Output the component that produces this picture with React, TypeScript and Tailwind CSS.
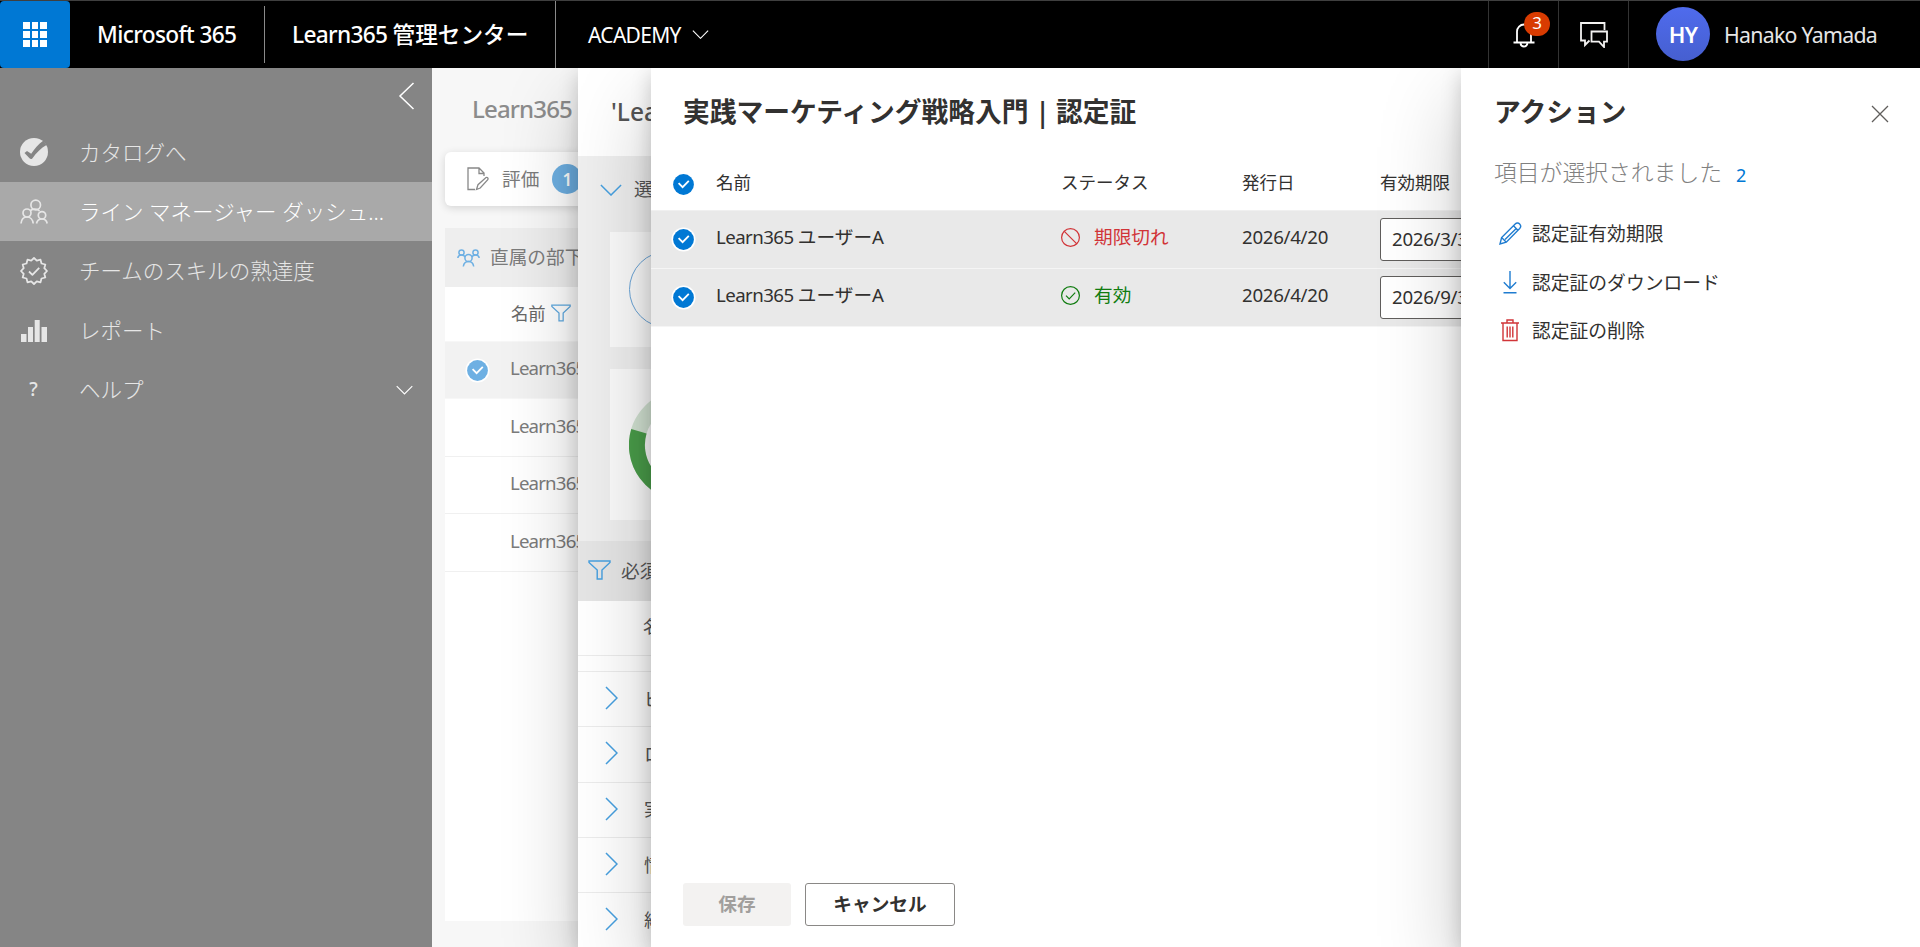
import { ReactNode } from "react";

type IconProps = { className?: string };

const PANEL_SHADOW =
  "shadow-[0_34px_77px_rgba(0,0,0,0.22),0_6px_19px_rgba(0,0,0,0.18)]";

//Latin text is set a little tighter than the Japanese text around it
const Latin = ({ children }: { children: ReactNode }) => (
  <span className="tracking-[-0.03em]">{children}</span>
);

const CheckCircle = ({ className }: IconProps) => (
  <svg className={className} width="25" height="25" viewBox="0 0 25 25">
    <circle cx="12.5" cy="12.5" r="12" fill="#fff" />
    <circle cx="12.5" cy="12.5" r="10.4" fill="currentColor" />
    <path d="M7.6 11.2l4 4 6.2-6.4" fill="none" stroke="#fff" strokeWidth="1.8" />
  </svg>
);

const FilterIcon = ({ className }: IconProps) => (
  <svg className={className} viewBox="0 0 24 21" fill="none" stroke="currentColor" strokeWidth="1.5">
    <path d="M1 1h22v1.6l-8.4 8V20H9.6v-9.4L1 2.6z" />
  </svg>
);

const Chevron = ({ className }: IconProps) => (
  <svg className={className} viewBox="0 0 24 13" fill="none" stroke="currentColor" strokeWidth="1.6">
    <path d="M1 1l11 11L23 1" />
  </svg>
);

const ChevronRight = () => (
  <svg width="13" height="24" viewBox="0 0 13 24" fill="none" stroke="#47a0e0" strokeWidth="1.5" className="-mt-[2px] shrink-0">
    <path d="M1 1l11 11L1 23" />
  </svg>
);

const CatalogIcon = () => (
  <svg width="28" height="28" viewBox="0 0 28 28">
    <circle cx="14" cy="14" r="14" fill="#e6e6e6" />
    <path d="M4.5 15l2.5-2 4.2 2.7C14.5 11 18 6.500 23.5 2.500l3 4.500C21 10 16.500 14.500 12.300 20.500c-1 .9-2 .7-2.800-.2z" fill="#858585" />
  </svg>
);

const TeamIcon = () => (
  <svg width="28" height="25" viewBox="0 0 28 25" fill="none" stroke="#e6e6e6" strokeWidth="1.7">
    <circle cx="15.7" cy="6" r="4.8" />
    <circle cx="7" cy="14" r="4" />
    <circle cx="22" cy="16.3" r="3.7" />
    <path d="M1 24.5c.4-4 2.800-6.500 6-6.500s5.800 2.500 6.200 6.500M16.500 24.500c.5-2.900 2.500-4.500 5.500-4.500s4.700 1.600 5.200 4.500M10.500 11.500c1.500-1 3-1.500 5-1.300 1.700.1 3 .7 4 1.800" />
  </svg>
);

//12-lobed badge
const SkillIcon = () => (
  <svg width="28" height="28" viewBox="0 0 28 28" fill="none" stroke="#e6e6e6" strokeWidth="1.8" strokeLinejoin="round">
    <path d="M14 1l2.800 2.700 3.700-1 1 3.800 3.800 1-1 3.700L27 14l-2.700 2.800 1 3.700-3.800 1-1 3.800-3.700-1L14 27l-2.800-2.700-3.700 1-1-3.800-3.800-1 1-3.700L1 14l2.700-2.800-1-3.700 3.800-1 1-3.800 3.700 1z" />
    <path d="M9 14.5l3.400 3.300 6.800-6.900" />
  </svg>
);

const ReportIcon = () => (
  <svg width="26" height="22" viewBox="0 0 26 22" fill="#e6e6e6" className="mt-px">
    <path d="M0 14h5.500v8H0zM7 7h5v15H7zM13.700 0h5v22h-5zM20.500 7H26v15h-5.500z" />
  </svg>
);

const navItems = [
  { label: "カタログへ", icon: <CatalogIcon /> },
  { label: "ライン マネージャー ダッシュ...", icon: <TeamIcon />, active: true },
  { label: "チームのスキルの熟達度", icon: <SkillIcon /> },
  { label: "レポート", icon: <ReportIcon /> },
  { label: "ヘルプ", icon: <span className="text-[19px] font-medium">?</span>, expandable: true },
];

const certificates = [
  { name: "ユーザーA", expired: true, issued: "2026/4/20", expiry: "2026/3/31" },
  { name: "ユーザーA", expired: false, issued: "2026/4/20", expiry: "2026/9/30" },
];

const courses = ["ビジネス", "ロジカル", "実践マーケティング", "情報", "経営"];

const Header = () => (
  <header className="relative z-50 flex h-[68px] shrink-0 items-stretch border-t border-[#3f3f3f] bg-black text-white">
    <div className="flex w-[70px] items-center justify-center rounded-sm bg-[#0078d4]">
      <div className="grid grid-cols-3 gap-[2px]">
        {Array.from({ length: 9 }, (_, i) => (
          <div key={i} className="h-[7px] w-[6.5px] bg-white" />
        ))}
      </div>
    </div>
    <div className="flex w-[194px] items-center pl-[27px] pt-[2px] text-[22.67px] font-medium tracking-[-0.027em]">
      Microsoft 365
    </div>
    <div className="my-[5px] w-px bg-[#8a8a8a]" />
    <div className="flex w-[290px] items-center whitespace-pre pl-[27px] pt-[2px] text-[22.67px] font-medium">
      <Latin>Learn365 </Latin>管理センター
    </div>
    <div className="w-px bg-[#8a8a8a]" />
    <div className="flex items-center gap-[11px] pl-[32px] text-[21px]">
      <span className="pt-[2px] tracking-[-0.033em]">ACADEMY</span>
      <Chevron className="h-[9px] w-[17px]" />
    </div>
    <div className="ml-auto flex">
      <div className="relative flex w-[70px] items-center justify-center border-l border-[#333]">
        <svg width="22" height="26" viewBox="0 0 22 26" fill="none" stroke="#fff" strokeWidth="1.8">
          <path d="M4 20V9.500a7 7 0 0 1 14 0V20M.5 20.500h21M7.500 21.500c.4 2 1.500 3 3.500 3s3-1 3.500-3" />
        </svg>
        <span className="absolute left-[35px] top-[11px] flex h-[24px] w-[26px] items-center justify-center rounded-full bg-[#d83b01] pb-[3px] text-[17px] leading-none">
          3
        </span>
      </div>
      <div className="flex w-[70px] items-center justify-center border-l border-[#333]">
        <svg width="28" height="26" viewBox="0 0 28 26" fill="none" stroke="#f3f2f1" strokeWidth="1.8">
          <path d="M24.500 8V1H1v17.500h4V23l4.500-4.500M11.500 9.500H27v10.200h-3V25l-5-5.300h-7.500z" />
        </svg>
      </div>
      <div className="flex w-[292px] items-center border-l border-[#333] pl-[27px]">
        <div className="-mt-[2px] flex size-[54px] items-center justify-center rounded-full bg-linear-to-b from-[#4f6bed] to-[#465fd0] text-[22px] font-semibold tracking-[-0.03em]">
          HY
        </div>
        <span className="ml-[14px] text-[21.3px] tracking-[-0.034em] text-[#e6e6e6]">
          Hanako Yamada
        </span>
      </div>
    </div>
  </header>
);

const Sidebar = () => (
  <nav className="flex w-[432px] shrink-0 flex-col bg-[#858585] text-[#e6e6e6]">
    <div className="flex h-[54.5px] justify-end pr-[17px] pt-[14px]">
      <svg width="17" height="28" viewBox="0 0 17 28" fill="none" stroke="#fff" strokeWidth="1.5">
        <path d="M15.500 1L2 14l13.500 13" />
      </svg>
    </div>
    {navItems.map((item) => (
      <div
        key={item.label}
        className={
          item.active
            ? "flex h-[59px] items-center bg-[#a9a9a9] text-white"
            : "flex h-[59.5px] items-center"
        }
      >
        <div className="flex w-[67px] items-center justify-center">{item.icon}</div>
        <span className="ml-[12px] text-[21.5px] font-light leading-none">{item.label}</span>
        {item.expandable && <Chevron className="ml-auto mr-[19px] h-[10px] w-[17px] text-white" />}
      </div>
    ))}
  </nav>
);

const TeamPage = () => (
  <main className="flex w-[146px] shrink-0 flex-col overflow-hidden whitespace-nowrap bg-[#f7f7f7] pl-[13px] text-[18.67px] text-[#7b7b7b]">
    <div className="flex h-[82px] shrink-0 items-center pl-[27px] text-[24px] font-medium tracking-[-0.035em] text-[#8c8c8c]">
      Learn365
    </div>
    <div className="mt-[2px] flex h-[54px] w-[200px] shrink-0 items-center rounded-md bg-white pl-[22px] shadow-[0_2px_8px_rgba(0,0,0,0.14)]">
      <svg width="22" height="24" viewBox="0 0 22 24" fill="none" stroke="#888" strokeWidth="1.3">
        <path d="M8 22.500H1V1h11l5 5v3M12 1v5.500h5" />
        <path d="M9.500 22.500l1.500-4.800 8-7.200c1.500-.5 2.500.8 1.800 2.200l-7.600 8.300z" />
      </svg>
      <span className="ml-[13px]">評価</span>
      <span className="ml-[13px] flex size-[30px] items-center justify-center rounded-full bg-[#6eb0e3] text-[17px] font-semibold text-white">
        1
      </span>
    </div>
    <div className="mt-[22px] flex h-[59px] shrink-0 items-center bg-[#eeeeee] pl-[12px]">
      <svg width="23" height="18" viewBox="0 0 23 18" fill="none" stroke="#6eb0e3" strokeWidth="1.5" className="shrink-0">
        <circle cx="4.5" cy="3.5" r="2.6" />
        <circle cx="18.5" cy="3.5" r="2.6" />
        <circle cx="11.5" cy="9" r="3.6" />
        <path d="M.8 9c.3-2 1.600-3 3.700-3s3 .8 3.800 2M14.700 8c.8-1.200 1.700-2 3.800-2s3.400 1 3.700 3M6.300 17.500c.5-3.200 2.300-4.900 5.200-4.900s4.700 1.700 5.200 4.900" />
      </svg>
      <span className="ml-[10px]">直属の部下</span>
    </div>
    <div className="flex h-[54px] shrink-0 items-center bg-white pl-[66px] text-[17.33px] text-[#666]">
      名前
      <FilterIcon className="-mt-[3px] ml-[5px] h-[18px] w-[20px] text-[#5fa9e0]" />
    </div>
    <div className="flex h-[58px] shrink-0 items-center border-y border-[#f7f7f7] bg-[#f2f2f2] pl-[20px]">
      <CheckCircle className="shrink-0 text-[#6eb0e3]" />
      <span className="ml-[20px] pb-[3px] tracking-[-0.045em]">Learn365</span>
    </div>
    {[0, 1, 2].map((i) => (
      <div
        key={i}
        className="flex h-[57.7px] shrink-0 items-center border-b border-[#f0f0f0] bg-white pb-[3px] pl-[65px] tracking-[-0.045em]"
      >
        Learn365
      </div>
    ))}
    <div className="mb-[26px] flex-1 bg-white" />
  </main>
);

const UserPanel = () => (
  <section className={`relative z-10 flex w-[73px] shrink-0 flex-col bg-[#efefef] text-[#555] ${PANEL_SHADOW}`}>
    <div className="flex w-[73px] flex-1 flex-col overflow-hidden whitespace-nowrap text-[18.67px]">
      <div className="flex h-[88px] shrink-0 items-center bg-white pl-[33px] text-[24.5px] font-medium">
        'Learn365
      </div>
      <div className="flex h-[76px] shrink-0 items-center pb-[9px] pl-[22px]">
        <Chevron className="h-[12px] w-[22px] shrink-0 text-[#47a0e0]" />
        <span className="ml-[12px]">選択</span>
      </div>
      <div className="ml-[32px] flex h-[115px] shrink-0 items-center bg-[#fbfbfb] pl-[19px]">
        <svg width="78" height="78" viewBox="0 0 78 78" className="shrink-0">
          <circle cx="38.5" cy="38.5" r="38" fill="none" stroke="#6ba5d8" />
        </svg>
      </div>
      <div className="ml-[32px] mt-[22px] flex h-[151px] shrink-0 items-center bg-[#fbfbfb] pl-[19px]">
        <svg width="112" height="112" viewBox="0 0 112 112" fill="none" strokeWidth="16" className="shrink-0">
          <circle cx="56" cy="56" r="48" stroke="#d3e3d3" />
          <path d="M9.900 42.200A48 48 0 0 0 56 104" stroke="#4a9d4a" />
        </svg>
      </div>
      <div className="mt-[21px] flex h-[60px] shrink-0 items-center bg-[#e5e5e5] pl-[10px]">
        <FilterIcon className="-mt-[2px] h-[20px] w-[23px] shrink-0 text-[#47a0e0]" />
        <span className="ml-[10px]">必須</span>
      </div>
      <div className="flex h-[55px] shrink-0 items-center border-b border-[#ececec] bg-white pb-[2px] pl-[65px] text-[17.33px]">
        名前
      </div>
      <div className="h-[16px] shrink-0 border-b border-[#ececec] bg-white" />
      {courses.map((course) => (
        <div
          key={course}
          className="flex h-[55.25px] shrink-0 items-center border-b border-[#ececec] bg-white pl-[27px]"
        >
          <ChevronRight />
          <span className="ml-[26px]">{course}</span>
        </div>
      ))}
    </div>
  </section>
);

const CertificatePanel = () => (
  <section className={`relative z-20 flex w-[810px] shrink-0 flex-col bg-white text-[#323130] ${PANEL_SHADOW}`}>
    <div className="flex w-[810px] flex-1 flex-col overflow-hidden whitespace-nowrap text-[18.67px]">
      <h1 className="flex h-[88px] items-center whitespace-pre pl-[32px] text-[26.75px] font-bold">
        実践マーケティング戦略入門<span className="font-semibold tracking-[-0.015em]"> | </span>認定証
      </h1>
      <div className="flex h-[55px] items-center border-b border-[#f0f0f0] pl-[20px] text-[17.5px]">
        <CheckCircle className="mt-[2px] shrink-0 text-[#0078d4]" />
        <span className="ml-[20px] w-[345px] shrink-0">名前</span>
        <span className="w-[181px] shrink-0">ステータス</span>
        <span className="w-[138px] shrink-0">発行日</span>
        <span className="shrink-0">有効期限</span>
      </div>
      {certificates.map((cert, i) => (
        <div
          key={i}
          className="flex h-[58px] items-center border-b border-[#f5f5f5] bg-[#e9e9e9] pl-[20px]"
        >
          <CheckCircle className="shrink-0 text-[#0078d4]" />
          <span className="ml-[20px] w-[345px] shrink-0 whitespace-pre pb-[4px]">
            <Latin>Learn365 </Latin>
            {cert.name}
          </span>
          <span
            className={
              cert.expired
                ? "flex w-[181px] shrink-0 items-center gap-[14px] pb-[4px] text-[#d13438]"
                : "flex w-[181px] shrink-0 items-center gap-[14px] pb-[4px] text-[#107c10]"
            }
          >
            <svg width="19" height="19" viewBox="0 0 19 19" fill="none" stroke="currentColor" strokeWidth="1.2">
              <circle cx="9.5" cy="9.5" r="8.9" />
              <path d={cert.expired ? "M3.3 3.3l12.5 12.5" : "M5 9.7l3.2 3.2 6-6.2"} />
            </svg>
            {cert.expired ? "期限切れ" : "有効"}
          </span>
          <span className="w-[138px] shrink-0 pb-[4px] tracking-[-0.015em]">{cert.issued}</span>
          <div className="flex h-[43px] w-[180px] shrink-0 items-center rounded-[3px] border border-[#605e5c] bg-white pl-[11px] tracking-[-0.015em]">
            {cert.expiry}
          </div>
        </div>
      ))}
      <div className="mb-[21px] mt-auto flex gap-[14px] pl-[32px] font-semibold">
        <button className="h-[43px] w-[108px] rounded-[3px] bg-[#f3f2f1] text-[#a19f9d]">保存</button>
        <button className="h-[43px] w-[150px] rounded-[3px] border border-[#8a8886]">キャンセル</button>
      </div>
    </div>
  </section>
);

const actions = [
  {
    label: "認定証有効期限",
    icon: (
      <svg width="23" height="23" viewBox="0 0 23 23" fill="none" stroke="#1f7cd0" strokeWidth="1.4">
        <path d="M1 22l1.600-6.500L16.200 2c3-3 7.300 1.500 4.500 4.500L7.300 20.200zM14.500 3.700l4.600 4.700M2.600 15.500l4.700 4.700M17.500 6.300L6 17.500" />
      </svg>
    ),
  },
  {
    label: "認定証のダウンロード",
    icon: (
      <svg width="14" height="23" viewBox="0 0 14 23" fill="none" stroke="#1f7cd0" strokeWidth="1.4">
        <path d="M7 0v17M.8 11.200L7 17.400l6.200-6.200M.5 21.800h13" />
      </svg>
    ),
  },
  {
    label: "認定証の削除",
    icon: (
      <svg width="18" height="23" viewBox="0 0 18 23" fill="none" stroke="#d13438" strokeWidth="1.4">
        <path d="M0 4h18M2 4v17.500h14V4M6 4V1h6v3M6.200 7.500v11M9 7.500v11M11.800 7.500v11" />
      </svg>
    ),
  },
];

const ActionPanel = () => (
  <aside className={`relative z-30 flex w-[459px] shrink-0 flex-col bg-white pl-[33px] text-[#323130] ${PANEL_SHADOW}`}>
    <div className="flex h-[88px] items-center justify-between pr-[31px]">
      <h2 className="text-[26.75px] font-bold">アクション</h2>
      <svg width="18" height="18" viewBox="0 0 18 18" fill="none" stroke="#605e5c" strokeWidth="1.3" className="mt-[4px]">
        <path d="M1 1l16 16M17 1L1 17" />
      </svg>
    </div>
    <div className="flex h-[33px] items-center">
      <span className="pt-px text-[22.8px] font-light text-[#808080]">項目が選択されました</span>
      <span className="ml-[14px] mt-[4px] text-[18px] text-[#0078d4]">2</span>
    </div>
    <div className="mt-[20px] flex flex-col">
      {actions.map((action) => (
        <div key={action.label} className="flex h-[48.7px] items-center text-[18.8px]">
          <div className="ml-[4px] flex w-[24px] justify-center">{action.icon}</div>
          <span className="ml-[10px] pt-[2px]">{action.label}</span>
        </div>
      ))}
    </div>
  </aside>
);

const App = () => {
  return (
    <div className="flex h-[947px] w-[1920px] flex-col overflow-hidden bg-white font-['Noto_Sans','Noto_Sans_CJK_JP',sans-serif] leading-none">
      <Header />
      <div className="flex min-h-0 flex-1">
        <Sidebar />
        <TeamPage />
        <UserPanel />
        <CertificatePanel />
        <ActionPanel />
      </div>
    </div>
  );
};

export default App;
